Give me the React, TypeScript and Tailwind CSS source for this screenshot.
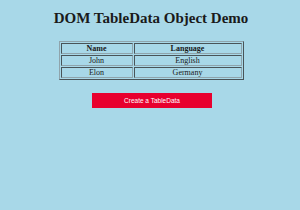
export default function App() {
  const rows = [
    { name: "John", lang: "English" },
    { name: "Elon", lang: "Germany" },
  ];

  return (
    <div className="w-[300px] h-[210px] bg-[#a8d8e8] flex flex-col items-center overflow-hidden font-['Liberation_Serif',serif] text-[#1a1a1a]">
      <h1 className="mt-[10px] ml-[2px] text-[15px] leading-[17px] font-bold">DOM TableData Object Demo</h1>
      <table className="mt-[14px] ml-[2px] w-[185px] border-separate border-spacing-[1px] border border-[#8fa4ac] [border-style:outset] text-[8px] leading-[9px]">
        <thead>
          <tr>
            <th className="w-[72px] border border-[#8fa4ac] [border-style:inset] py-0 font-bold">Name</th>
            <th className="border border-[#8fa4ac] [border-style:inset] py-0 font-bold">Language</th>
          </tr>
        </thead>
        <tbody>
          {rows.map((r) => (
            <tr key={r.name}>
              <td className="border border-[#8fa4ac] [border-style:inset] py-0 text-center">{r.name}</td>
              <td className="border border-[#8fa4ac] [border-style:inset] py-0 text-center">{r.lang}</td>
            </tr>
          ))}
        </tbody>
      </table>
      <button className="mt-[13px] ml-[4px] w-[120px] h-[15px] bg-[#e8002e] text-white text-[6.5px] font-['Liberation_Sans',sans-serif]">
        Create a TableData
      </button>
    </div>
  );
}
